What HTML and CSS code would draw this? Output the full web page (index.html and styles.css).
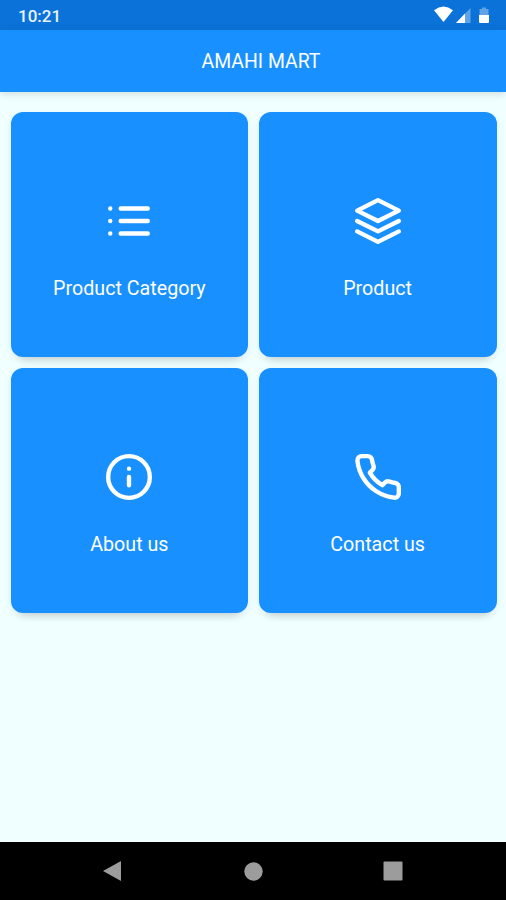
FILE: index.html
```html
<!DOCTYPE html>
<html lang="en">
<head>
<meta charset="UTF-8" />
<meta name="viewport" content="width=device-width, initial-scale=1" />
<title>Amahi Mart</title>
<link rel="stylesheet" href="styles.css">
</head>
<body>
<div class="status-bar">
  <span class="time">10:21</span>
  <svg class="status-icons" width="56" height="18" viewBox="0 0 56 18" aria-hidden="true">
    <path d="M0 4.2 Q9.5 -3.2 19 4.2 L9.5 16 Z" fill="#fff" />
    <path d="M36.5 2 V17 H22 Z" fill="#fff" fill-opacity="0.35" />
    <path d="M31 7.5 V17 H22 Z" fill="#fff" />
    <path d="M45.5 3 h2.5 v-1.5 h4 v1.5 h2.5 v6 h-9 z" fill="#fff" fill-opacity="0.35" />
    <path d="M45 9 h10 v7 q0 1 -1 1 h-8 q-1 0 -1 -1 z" fill="#fff" />
  </svg>
</div>

<header class="app-bar">
  <h1>AMAHI MART</h1>
</header>

<main class="menu">
  <a class="card">
    <svg class="icon" viewBox="0 0 24 24">
      <path d="M8 6h13M8 12h13M8 18h13M3 6h.01M3 12h.01M3 18h.01" />
    </svg>
    <span>Product Category</span>
  </a>
  <a class="card">
    <svg class="icon" viewBox="0 0 24 24">
      <path d="M12 2 2 7l10 5 10-5-10-5z" />
      <path d="m2 17 10 5 10-5" />
      <path d="m2 12 10 5 10-5" />
    </svg>
    <span>Product</span>
  </a>
  <a class="card">
    <svg class="icon" viewBox="0 0 24 24">
      <circle cx="12" cy="12" r="10" />
      <path d="M12 16v-4M12 8h.01" />
    </svg>
    <span>About us</span>
  </a>
  <a class="card">
    <svg class="icon" viewBox="0 0 24 24">
      <path d="M22 16.92v3a2 2 0 0 1-2.18 2 19.79 19.79 0 0 1-8.63-3.07 19.5 19.5 0 0 1-6-6 19.79 19.79 0 0 1-3.07-8.67A2 2 0 0 1 4.11 2h3a2 2 0 0 1 2 1.72 12.84 12.84 0 0 0 .7 2.81 2 2 0 0 1-.45 2.11L8.09 9.91a16 16 0 0 0 6 6l1.27-1.27a2 2 0 0 1 2.11-.45 12.84 12.84 0 0 0 2.81.7A2 2 0 0 1 22 16.92z" />
    </svg>
    <span>Contact us</span>
  </a>
</main>

<nav class="nav-bar">
  <svg width="20" height="22" viewBox="0 0 20 22"><path d="M19 1v20L1 11z" /></svg>
  <svg width="20" height="20" viewBox="0 0 20 20"><circle cx="10.5" cy="10.5" r="9.2" /></svg>
  <svg width="20" height="20" viewBox="0 0 20 20"><rect x="0.5" y="0.5" width="19" height="19" rx="1" /></svg>
</nav>
</body>
</html>
```

FILE: styles.css
```css
:root {
  --primary: #1890ff;
  --primary-dark: #0b72d9;
  --page-bg: #f0ffff;
  --nav-icon: #9c9c9c;
}

* {
  box-sizing: border-box;
}

body {
  margin: 0;
  height: 100vh;
  display: flex;
  flex-direction: column;
  background: var(--page-bg);
  color: #fff;
  font-family: Roboto, "Liberation Sans", sans-serif;
}

.status-bar {
  height: 30px;
  padding: 2px 16px 0 18px;
  display: flex;
  align-items: center;
  justify-content: space-between;
  background: var(--primary-dark);
}

.time {
  font-size: 17px;
  font-weight: 500;
  color: #e8f3ff;
}

.status-icons {
  margin-bottom: 2px;
}

.app-bar {
  height: 61.5px;
  padding: 2px 0 0 16px;
  display: flex;
  align-items: center;
  justify-content: center;
  background: var(--primary);
  box-shadow: 0 2px 8px rgba(0, 0, 0, 0.14);
}

.app-bar h1 {
  margin: 0;
  font-size: 19.4px;
  font-weight: 400;
}

.menu {
  flex: 1;
  padding: 20.5px 9.5px 0 10.5px;
  display: grid;
  grid-template-columns: 1fr 1fr;
  grid-auto-rows: 245px;
  align-content: start;
  gap: 11px 10.5px;
}

.card {
  padding-top: 84.4px;
  display: flex;
  flex-direction: column;
  align-items: center;
  gap: 30.6px;
  background: var(--primary);
  border-radius: 12px;
  box-shadow: 0 12px 10px -10px rgba(0, 0, 0, 0.14), 0 3px 8px rgba(0, 0, 0, 0.08);
  font-size: 19.7px;
  line-height: 24px;
}

.icon {
  width: 50px;
  height: 50px;
  fill: none;
  stroke: #fff;
  stroke-width: 2.1;
  stroke-linecap: round;
  stroke-linejoin: round;
}

.nav-bar {
  height: 58.5px;
  padding: 0 103px 0 102px;
  display: flex;
  align-items: center;
  justify-content: space-between;
  background: #000;
}

.nav-bar svg {
  fill: var(--nav-icon);
}
```
